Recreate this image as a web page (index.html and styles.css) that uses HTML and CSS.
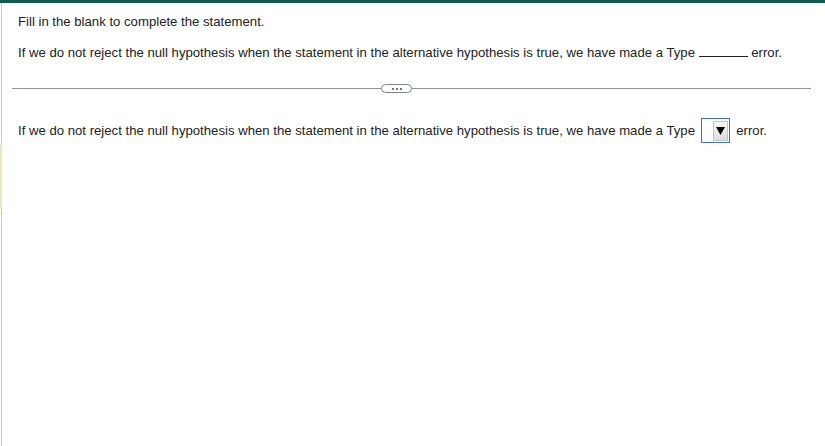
FILE: index.html
```html
<!DOCTYPE html>
<html>
<head>
<meta charset="utf-8">
<link rel="stylesheet" href="styles.css">
</head>
<body>
<div class="topbar"></div>
<div class="frame">
  <div class="marker"></div>
  <div class="question">
    <p class="line first">Fill in the blank to complete the statement.</p>
    <p class="line">If we do not reject the null hypothesis when the statement in the alternative hypothesis is true, we have made a Type <span class="blank"></span> error.</p>
  </div>
  <div class="divider">
    <span class="rule rule-left"></span>
    <span class="pill"><span class="dot"></span><span class="dot"></span><span class="dot"></span></span>
    <span class="rule"></span>
  </div>
  <div class="answer">
    <p class="line">If we do not reject the null hypothesis when the statement in the alternative hypothesis is true, we have made a Type <span class="select"><span class="btn"><svg width="9" height="8" viewBox="0 0 9 8"><path d="M0 0H9L4.5 8Z" fill="#000"/></svg></span></span> error.</p>
  </div>
</div>
</body>
</html>
```
FILE: styles.css
```css
html, body {
  margin: 0;
  padding: 0;
  background: #fff;
}
body {
  font-family: "Liberation Sans", Arial, sans-serif;
  font-size: 13.16px;
  color: #222;
  width: 825px;
  height: 446px;
  overflow: hidden;
}
.topbar {
  height: 3px;
  background: #0a5c50;
}
.frame {
  position: relative;
  margin-left: 1px;
  border-left: 1px solid #c9c7d6;
  height: 443px;
}
.marker {
  position: absolute;
  left: -2px;
  top: 142px;
  width: 2px;
  height: 64px;
  background: #f5e6b8;
}
.question {
  padding: 11px 0 0 16px;
}
.line {
  margin: 0;
  line-height: 16px;
  white-space: nowrap;
}
.first {
  margin-bottom: 14px;
}
.blank {
  display: inline-block;
  width: 49px;
  height: 12px;
  border-bottom: 1px solid #222;
  margin: 0;
  vertical-align: baseline;
}
.divider {
  display: flex;
  align-items: center;
  margin: 23px 14px 0 10px;
  height: 9px;
}
.rule {
  flex: 1;
  height: 1px;
  background: #8c94a6;
}
.rule-left {
  flex: 0 0 369px;
}
.pill {
  display: flex;
  align-items: center;
  justify-content: center;
  gap: 2px;
  width: 29px;
  height: 7px;
  border: 1px solid #7c8497;
  border-radius: 5px;
  background: #fff;
}
.dot {
  width: 2px;
  height: 2px;
  background: #6f7688;
}
.answer {
  padding: 25px 0 0 16px;
}
.answer .line {
  line-height: 26px;
}
.select {
  display: inline-flex;
  justify-content: flex-end;
  align-items: center;
  box-sizing: border-box;
  width: 29px;
  height: 25px;
  border: 1px solid #3c6fd0;
  padding-right: 1px;
  vertical-align: middle;
  margin: 0 3px 0 2px;
  position: relative;
  top: -1px;
}
.btn {
  display: flex;
  align-items: center;
  justify-content: center;
  box-sizing: border-box;
  width: 15px;
  height: 20px;
  border: 1px solid #c4c4c4;
  background: linear-gradient(#f6f6f6, #dedede);
}
```
